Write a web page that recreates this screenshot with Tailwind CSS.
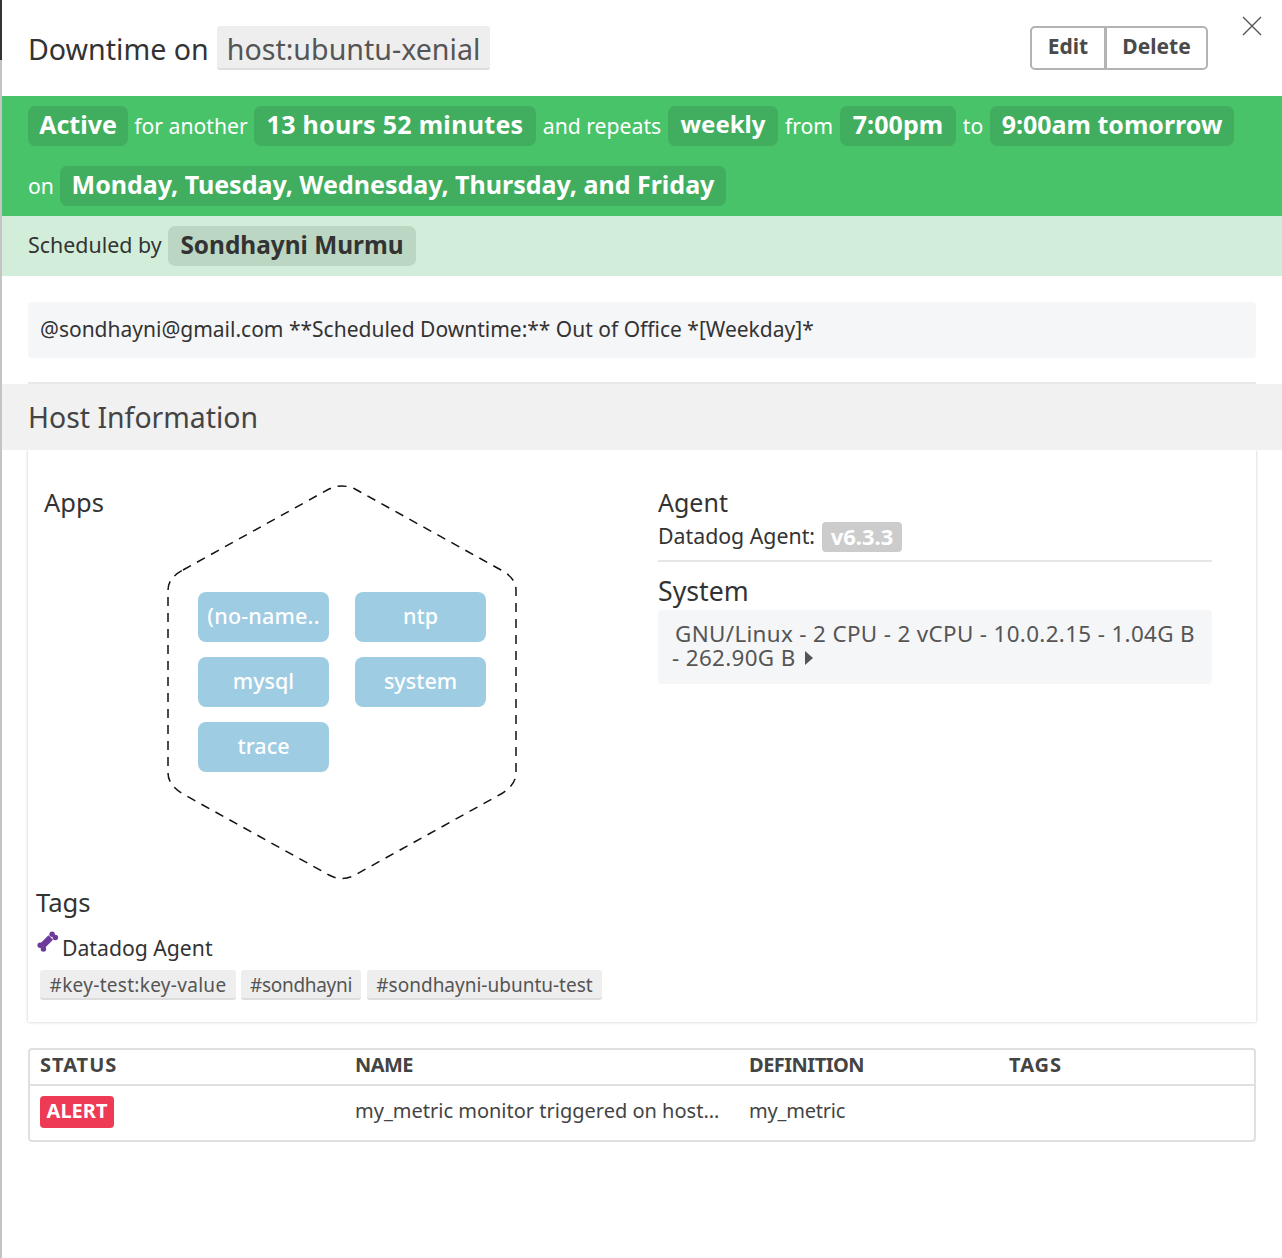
<!doctype html>
<html><head><meta charset="utf-8"><script src="https://cdn.jsdelivr.net/npm/@tailwindcss/browser@4"></script></head>
<body class="bg-white font-['Noto_Sans',sans-serif] text-[#333]">
<div class="relative w-[1282px] h-[1258px] overflow-hidden pl-[2px]">
  <div class="absolute left-0 top-0 w-[2px] h-full bg-[#c4c4c4]"></div>
  <div class="absolute left-0 top-0 w-[2px] h-[60px] bg-[#333]"></div>

  <header class="h-[96px] flex items-start pl-[26px] pt-[26px] pr-[74px]">
    <h1 class="text-[28.6px] leading-[46px] text-[#333] whitespace-nowrap">Downtime on</h1>
    <span class="ml-[8px] h-[44px] px-[10px] rounded-[3px] bg-[#eee] border-b-2 border-[#ddd] text-[28.6px] leading-[46px] text-[#555] whitespace-nowrap">host:ubuntu-xenial</span>
    <div class="ml-auto flex h-[44px] rounded-[5px] border-2 border-[#b3b3b3] text-[21px] leading-[36px] font-bold text-[#4a4a4a]">
      <span class="w-[75px] flex justify-center border-r-[3px] border-[#b3b3b3]">Edit</span>
      <span class="w-[99px] flex justify-center">Delete</span>
    </div>
  </header>
  <svg class="absolute left-[1242px] top-[16px]" width="20" height="20" viewBox="0 0 20 20" fill="none" stroke="#555" stroke-width="1.4"><path d="M1 1L19 19M19 1L1 19"/></svg>

  <section class="h-[120px] bg-[#48c36a] text-white pl-[26px]">
    <div class="h-[60px] pt-[10px] flex items-start text-[21.2px] whitespace-nowrap">
      <b class="h-[40px] w-[100px] rounded-[7px] bg-[#41ae5f] text-center text-[25px] leading-[36px] font-bold">Active</b>
      <span class="w-[126px] text-center h-[40px] leading-[40px]">for another</span>
      <b class="h-[40px] w-[282px] rounded-[7px] bg-[#41ae5f] text-center text-[25px] tracking-[0.3px] leading-[36px] font-bold">13 hours 52 minutes</b>
      <span class="w-[132px] text-center h-[40px] leading-[40px]">and repeats</span>
      <b class="h-[40px] w-[110px] rounded-[7px] bg-[#41ae5f] text-center text-[24px] leading-[36px] font-bold">weekly</b>
      <span class="w-[62px] text-center h-[40px] leading-[40px]">from</span>
      <b class="h-[40px] w-[116px] rounded-[7px] bg-[#41ae5f] text-center text-[25px] tracking-[0.1px] leading-[36px] font-bold">7:00pm</b>
      <span class="w-[34px] text-center h-[40px] leading-[40px]">to</span>
      <b class="h-[40px] w-[244px] rounded-[7px] bg-[#41ae5f] text-center text-[25px] leading-[36px] font-bold">9:00am tomorrow</b>
    </div>
    <div class="h-[60px] pt-[10px] flex items-start text-[21.2px] whitespace-nowrap">
      <span class="w-[32px] h-[40px] leading-[40px]">on</span>
      <b class="h-[40px] w-[666px] rounded-[7px] bg-[#41ae5f] text-center text-[25px] leading-[36px] font-bold">Monday, Tuesday, Wednesday, Thursday, and Friday</b>
    </div>
  </section>
  <section class="h-[60px] bg-[#d2eeda] pl-[26px] pt-[10px] flex items-start text-[21.4px] text-[#333] whitespace-nowrap">
    <span class="w-[140px] h-[40px] leading-[38px]">Scheduled by</span>
    <b class="h-[40px] w-[248px] rounded-[7px] bg-[#bbd6c2] text-center text-[24.4px] leading-[38px] font-bold">Sondhayni Murmu</b>
  </section>

  <div class="mx-[26px] mt-[26px] h-[56px] w-[1228px] rounded-[4px] bg-[#f5f6f8] px-[12px] pt-[11px] text-[21px] leading-[32px] text-[#333] whitespace-nowrap">@sondhayni@gmail.com **Scheduled Downtime:** Out of Office *[Weekday]*</div>
  <div class="ml-[26px] mt-[24px] w-[1228px] h-[2px] bg-[#e8e8e8]"></div>

  <div class="relative z-10 h-[66px] bg-[#f1f1f1] pl-[26px] text-[28.4px] leading-[67px] text-[#444]">Host Information</div>

  <section class="ml-[26px] w-[1228px] h-[572px] bg-white shadow-[0_0_3px_rgba(0,0,0,0.22)] flex relative">
    <div class="w-[630px] relative">
      <h2 class="absolute left-[16px] top-[34px] text-[25.5px] leading-[36px] text-[#333]">Apps</h2>
      <svg class="absolute left-[139px] top-[34px]" width="350" height="396" viewBox="0 0 350 396" fill="none" stroke="#111" stroke-width="1.5" stroke-dasharray="9 7">
        <path d="M16 86L162 5Q175 -1 188 5L334 86Q349 94 349 106V289Q349 301 334 310L188 391Q175 398 162 391L16 310Q1 301 1 289V106Q1 94 16 86Z"/>
      </svg>
      <div class="absolute left-[170px] top-[142px] grid grid-cols-[131px_131px] auto-rows-[50px] gap-x-[26px] gap-y-[15px] text-[21.5px] font-medium text-white text-center leading-[48px]">
        <div class="rounded-[8px] bg-[#9ecce3] tracking-[0.2px] whitespace-nowrap">(no-name..</div>
        <div class="rounded-[8px] bg-[#9ecce3]">ntp</div>
        <div class="rounded-[8px] bg-[#9ecce3]">mysql</div>
        <div class="rounded-[8px] bg-[#9ecce3]">system</div>
        <div class="rounded-[8px] bg-[#9ecce3]">trace</div>
      </div>
      <h2 class="absolute left-[8px] top-[435px] text-[25.6px] leading-[36px] text-[#333]">Tags</h2>
      <svg class="absolute left-[9px] top-[481px]" width="22" height="22" viewBox="0 0 24 24" fill="#6b3a9b">
        <path d="M6 16L15 7" stroke="#6b3a9b" stroke-width="7"/><circle cx="16.5" cy="3.5" r="3"/><circle cx="20" cy="7" r="3"/><circle cx="3.5" cy="15.5" r="3"/><circle cx="7" cy="19.5" r="3"/>
      </svg>
      <div class="absolute left-[34px] top-[482px] text-[21.2px] leading-[32px]">Datadog Agent</div>
      <div class="absolute left-[12px] top-[520px] flex gap-[5px] text-[19px] leading-[31px] text-[#555] whitespace-nowrap">
        <span class="w-[196px] h-[30px] text-center rounded-[3px] bg-[#eee] border-b-2 border-[#ddd] tracking-[0.3px]">#key-test:key-value</span>
        <span class="w-[120px] h-[30px] text-center rounded-[3px] bg-[#eee] border-b-2 border-[#ddd] tracking-[-0.3px]">#sondhayni</span>
        <span class="ml-[1px] w-[235px] h-[30px] text-center rounded-[3px] bg-[#eee] border-b-2 border-[#ddd]">#sondhayni-ubuntu-test</span>
      </div>
    </div>
    <div class="w-[554px] pt-[34px]">
      <h2 class="text-[25px] leading-[36px] mb-[2px] text-[#333]">Agent</h2>
      <div class="flex h-[30px] text-[21.3px] leading-[28px]">Datadog Agent:<b class="ml-[7px] h-[30px] w-[80px] rounded-[4px] bg-[#ccc] text-white text-center leading-[28px] text-[22px]">v6.3.3</b></div>
      <div class="mt-[8px] h-[2px] bg-[#e6e6e6]"></div>
      <h2 class="mt-[10px] text-[26.7px] leading-[38px] text-[#333]">System</h2>
      <div class="h-[74px] rounded-[4px] bg-[#f5f6f8] pl-[17px] pr-[8px] pt-[12px] text-[22.4px] tracking-[0.35px] leading-[24px] text-[#555] whitespace-nowrap">GNU/Linux - 2 CPU - 2 vCPU - 10.0.2.15 - 1.04G B<br><span class="-ml-[3px] inline-flex items-center">- 262.90G B<svg class="ml-[9px]" width="8" height="14" viewBox="0 0 8 14"><path d="M0 0l8 7-8 7z" fill="#555"/></svg></span></div>
    </div>
  </section>

  <section class="ml-[26px] mt-[26px] w-[1228px] h-[94px] rounded-[4px] border-2 border-[#e0e0e0]">
    <div class="h-[36px] grid grid-cols-[315px_394px_260px_1fr] pl-[10px] border-b-2 border-[#e0e0e0] text-[20px] font-bold text-[#444] leading-[30px]">
      <span class="tracking-[1px]">STATUS</span><span class="tracking-[-0.6px]">NAME</span><span class="tracking-[-0.5px]">DEFINITION</span><span class="tracking-[1px]">TAGS</span>
    </div>
    <div class="grid grid-cols-[315px_394px_260px_1fr] pl-[10px] text-[20px] text-[#444] pt-[10px] leading-[30px]">
      <span><b class="inline-block h-[32px] w-[74px] rounded-[4px] bg-[#ee3a55] text-white text-center leading-[30px]">ALERT</b></span>
      <span class="whitespace-nowrap">my_metric monitor triggered on host...</span><span class="tracking-[-0.2px]">my_metric</span><span></span>
    </div>
  </section>
</div>
</body></html>
